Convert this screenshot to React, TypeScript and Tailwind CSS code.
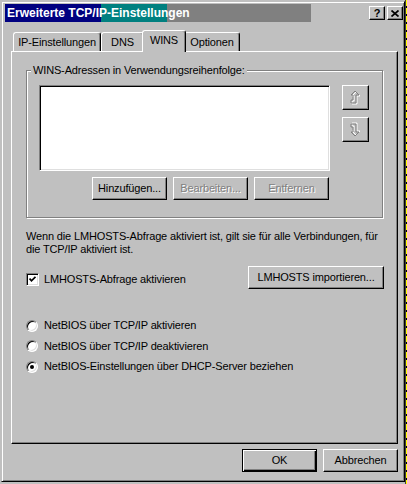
import React from "react";

const raised =
  "bg-[#c0c0c0] border border-t-white border-l-white border-r-black border-b-black shadow-[inset_-1px_-1px_0_#808080]";
const sunken =
  "border border-t-[#808080] border-l-[#808080] border-r-white border-b-white shadow-[inset_1px_1px_0_#000,inset_-1px_-1px_0_#dfdfdf]";
const disabledText = "text-[#808080] [text-shadow:1px_1px_0_#fff]";

function Tab({ label, w, selected }: { label: string; w: string; selected?: boolean }) {
  if (selected) {
    return (
      <div
        className={`${w} relative z-10 -mx-[2px] -mb-[1px] h-[22px] bg-[#c0c0c0] border-t border-l border-r border-t-white border-l-white border-r-black shadow-[inset_-1px_0_0_#808080] rounded-t-[3px] flex justify-center pt-[3px]`}
      >
        {label}
      </div>
    );
  }
  return (
    <div
      className={`${w} h-[19px] border-t border-l border-r border-t-white border-l-white border-r-black shadow-[inset_-1px_0_0_#808080] rounded-t-[3px] flex justify-center pt-[3px]`}
    >
      {label}
    </div>
  );
}

function Arrow({ down }: { down?: boolean }) {
  const pts = "4.5,0.5 8.5,4.5 5.5,4.5 5.5,12.5 0.5,12.5 0.5,9.5 2.5,9.5 2.5,4.5 0.5,4.5";
  return (
    <svg width="11" height="15" viewBox="0 0 11 15" className={down ? "rotate-180 -scale-x-100" : ""}>
      <polygon points={pts} transform="translate(1.5 1.5)" fill="none" stroke="#ffffff" strokeWidth="1" />
      <polygon points={pts} transform="translate(0.5 0.5)" fill="none" stroke="#808080" strokeWidth="1" />
    </svg>
  );
}

function Button({ label, w, disabled }: { label: string; w: string; disabled?: boolean }) {
  return (
    <div className={`${raised} ${w} h-[23px] flex items-center justify-center ${disabled ? disabledText : ""}`}>
      {label}
    </div>
  );
}

function Radio({ label, checked }: { label: string; checked?: boolean }) {
  return (
    <div className="h-[13px] flex items-center gap-[6px]">
      <div className="w-[12px] h-[12px] rounded-full bg-white border border-t-[#808080] border-l-[#808080] border-r-white border-b-white shadow-[inset_1px_1px_0_#000,inset_-1px_-1px_0_#dfdfdf] flex items-center justify-center">
        {checked && <div className="w-[4px] h-[4px] rounded-full bg-black" />}
      </div>
      <span>{label}</span>
    </div>
  );
}

export default function App() {
  return (
    <div className="w-[407px] h-[484px] bg-[#c0c0c0] flex overflow-hidden text-[11px] leading-[13px] tracking-[-0.15px] text-black font-['Liberation_Sans',Arial,sans-serif]">
      {/* dialog frame */}
      <div className="mt-[1px] ml-[1px] w-[404px] h-[481px] shrink-0 flex flex-col border border-t-[#c0c0c0] border-l-[#c0c0c0] border-r-black border-b-black shadow-[inset_1px_1px_0_#fff,inset_-1px_-1px_0_#808080] pt-[2px] pl-[3px] pr-[1px]">
        {/* title bar */}
        <div className="h-[18px] flex items-center bg-[linear-gradient(to_right,#000080_0_96px,#008080_96px_162px,#808080_162px_306px,#c0c0c0_306px)]">
          <span className="pl-[2px] font-bold text-white text-[12px] tracking-normal">Erweiterte TCP/IP-Einstellungen</span>
          <div className="ml-auto flex gap-[2px]">
            <div className={`${raised} w-[16px] h-[14px] flex items-center justify-center font-bold text-[11px] leading-none`}>?</div>
            <div className={`${raised} w-[16px] h-[14px] flex items-center justify-center`}>
              <svg width="8" height="7" viewBox="0 0 8 7">
                <path d="M0.5 0.5 L7.5 6.5 M7.5 0.5 L0.5 6.5" stroke="#000" strokeWidth="1.7" />
              </svg>
            </div>
          </div>
        </div>

        {/* tabs */}
        <div className="mt-[8px] ml-[8px] h-[21px] flex items-end">
          <Tab label="IP-Einstellungen" w="w-[88px]" />
          <Tab label="DNS" w="w-[43px]" />
          <Tab label="WINS" w="w-[44px]" selected />
          <Tab label="Optionen" w="w-[56px]" />
        </div>

        {/* tab panel */}
        <div className="ml-[6px] w-[387px] h-[393px] shrink-0 flex flex-col border border-t-white border-l-white border-r-black border-b-black shadow-[inset_-1px_-1px_0_#808080]">
          <fieldset className="mt-[12px] ml-[14px] w-[357px] border border-[#808080] shadow-[1px_1px_0_#fff,inset_1px_1px_0_#fff] pl-[12px] pt-[8px] pb-[17px]">
            <legend className="-ml-[8px] px-[2px] bg-[#c0c0c0]">WINS-Adressen in Verwendungsreihenfolge:</legend>
            <div className="flex items-start">
              <div className={`${sunken} w-[291px] h-[86px] bg-white`} />
              <div className="ml-[12px] flex flex-col gap-[7px]">
                <div className={`${raised} w-[27px] h-[25px] flex items-center justify-center`}>
                  <Arrow />
                </div>
                <div className={`${raised} w-[27px] h-[25px] flex items-center justify-center`}>
                  <Arrow down />
                </div>
              </div>
            </div>
            <div className="mt-[6px] ml-[53px] flex gap-[6px]">
              <Button label="Hinzufügen..." w="w-[75px]" />
              <Button label="Bearbeiten..." w="w-[75px]" disabled />
              <Button label="Entfernen" w="w-[75px]" disabled />
            </div>
          </fieldset>

          <p className="mt-[12px] ml-[14px] whitespace-nowrap">
            Wenn die LMHOSTS-Abfrage aktiviert ist, gilt sie für alle Verbindungen, für
            <br />
            die TCP/IP aktiviert ist.
          </p>

          <div className="mt-[10px] ml-[14px] w-[358px] flex items-start">
            <div className="mt-[7px] flex items-center gap-[5px]">
              <div className={`${sunken} w-[13px] h-[13px] bg-white flex items-center justify-center`}>
                <svg width="7" height="7" viewBox="0 0 7 7">
                  <path d="M0.5 2.5 L2.5 4.8 L6.5 0.8" fill="none" stroke="#000" strokeWidth="1.8" />
                </svg>
              </div>
              <span>LMHOSTS-Abfrage aktivieren</span>
            </div>
            <div className="ml-auto">
              <Button label="LMHOSTS importieren..." w="w-[136px]" />
            </div>
          </div>

          <div className="mt-[30px] ml-[14px] flex flex-col gap-[7.5px]">
            <Radio label="NetBIOS über TCP/IP aktivieren" />
            <Radio label="NetBIOS über TCP/IP deaktivieren" />
            <Radio label="NetBIOS-Einstellungen über DHCP-Server beziehen" checked />
          </div>
        </div>

        {/* dialog buttons */}
        <div className="mt-[5px] mr-[5px] flex justify-end gap-[6px]">
          <div className="w-[75px] h-[23px] bg-[#c0c0c0] border border-black shadow-[inset_1px_1px_0_#fff,inset_-1px_-1px_0_#000,inset_-2px_-2px_0_#808080] flex items-center justify-center">
            OK
          </div>
          <Button label="Abbrechen" w="w-[75px]" />
        </div>
      </div>

      {/* edge of the window behind */}
      <div className="w-[2px] h-full border-l border-[#404040] bg-[repeating-linear-gradient(to_bottom,#ffff00_0_6px,#000000_6px_8px)]" />
    </div>
  );
}
